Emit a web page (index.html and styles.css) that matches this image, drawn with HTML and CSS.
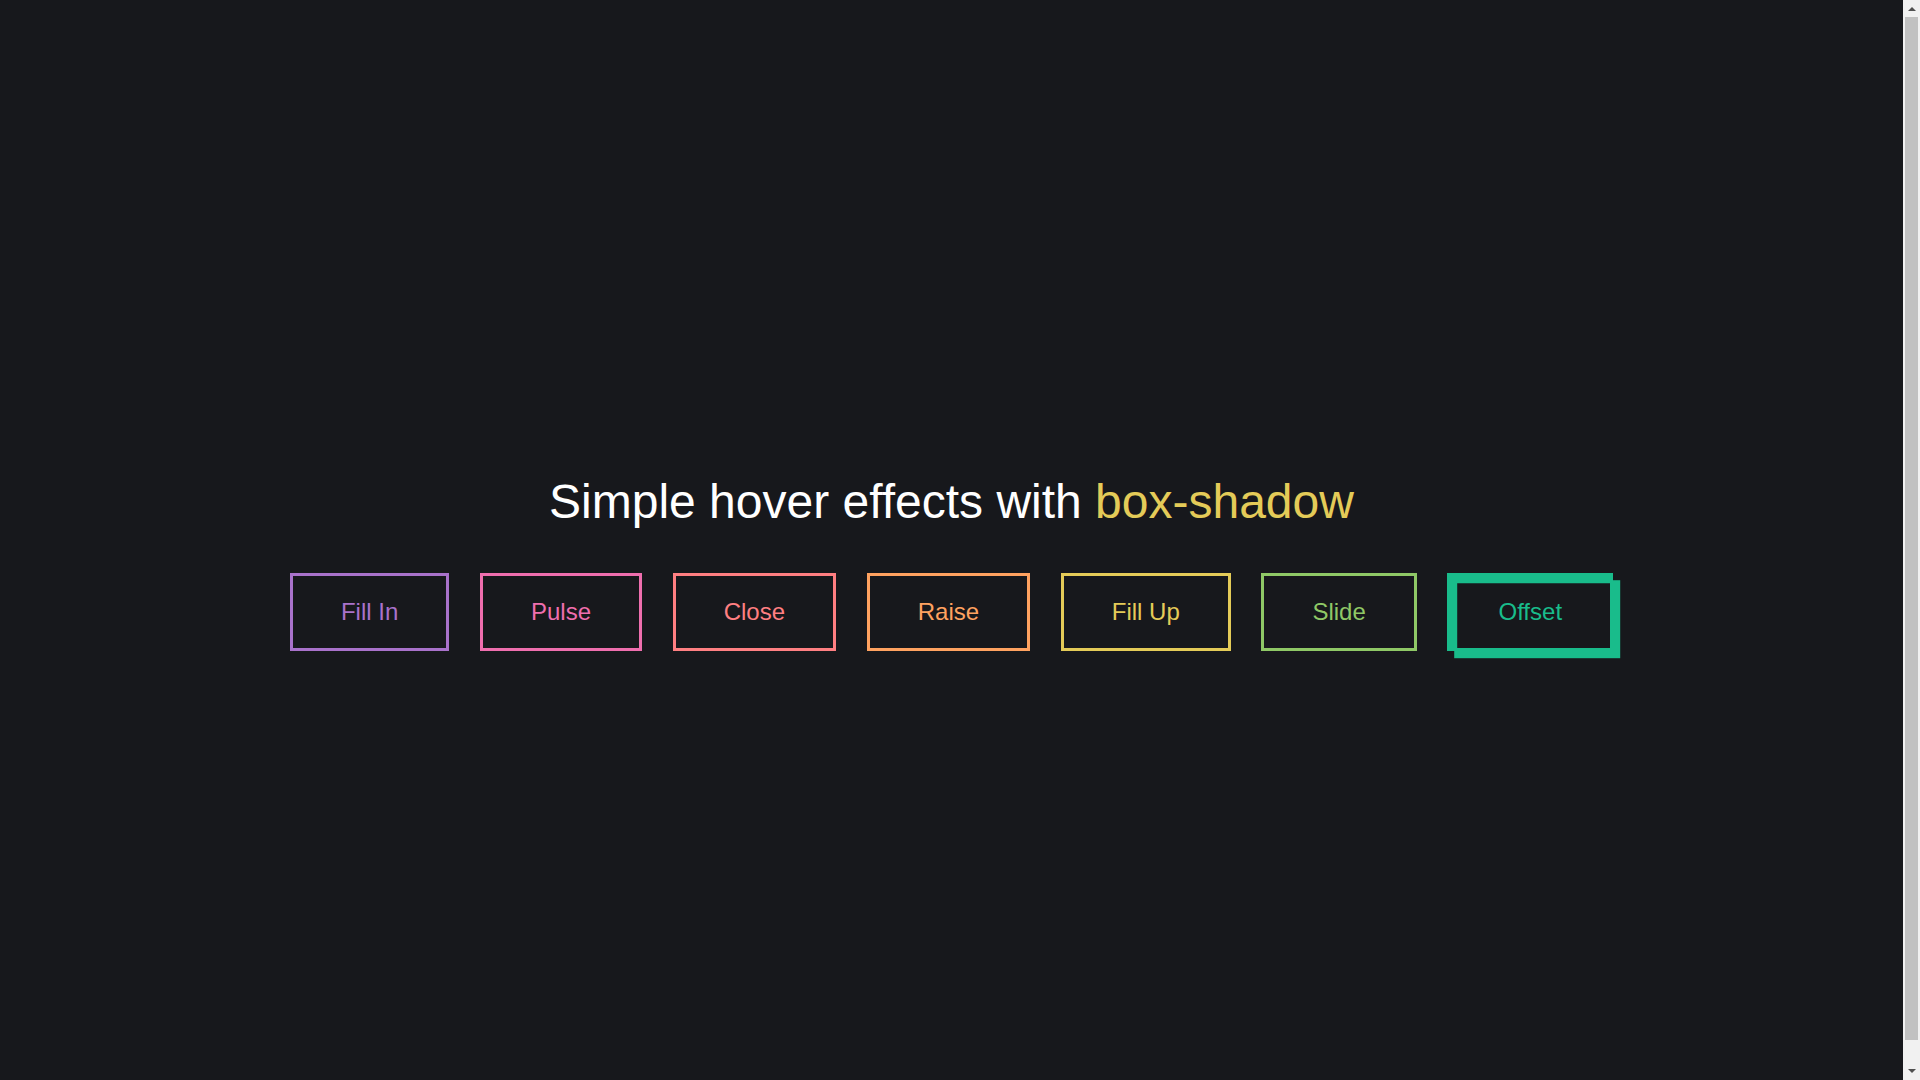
FILE: index.html
```html
<!DOCTYPE html>
<html lang="en">
<head>
<meta charset="utf-8">
<title>Simple hover effects with box-shadow</title>
<link rel="stylesheet" href="styles.css">
</head>
<body>
<main class="page">
  <div class="buttons">
    <h1>Simple hover effects with <code>box-shadow</code></h1>
    <button class="btn fill">Fill In</button>
    <button class="btn pulse">Pulse</button>
    <button class="btn close">Close</button>
    <button class="btn raise">Raise</button>
    <button class="btn up">Fill Up</button>
    <button class="btn slide">Slide</button>
    <button class="btn offset">Offset</button>
  </div>
</main>
<div class="scrollbar" aria-hidden="true">
  <span class="arrow arrow-up"></span>
  <span class="thumb"></span>
  <span class="arrow arrow-down"></span>
</div>
</body>
</html>
```

FILE: styles.css
```css
html {
  background: #17181c;
}

body {
  margin: 0;
  height: 1080px;
  overflow: hidden;
  display: flex;
  background: #17181c;
  color: #fff;
  font: 400 24px "Liberation Sans", Arial, sans-serif;
}

.page {
  flex: 1;
  padding: 12px;
  min-height: 1080px;
  display: flex;
  justify-content: center;
  align-content: center;
  align-items: center;
  text-align: center;
}

h1 {
  font-size: 48px;
  font-weight: 400;
  margin: 32.16px 0;
}

code {
  color: #e4cb58;
  font: inherit;
}

.btn {
  background: none;
  border: 3px solid;
  font: inherit;
  line-height: 1;
  margin: 12px;
  padding: 24px 48px;
  color: var(--color);
}

.fill { --color: #a972cb; }
.pulse { --color: #ef6eae; }
.close { --color: #ff7f82; }
.raise { --color: #ffa260; }
.up { --color: #e4cb58; }
.slide { --color: #8fc866; }
.offset {
  --color: #19bc8b;
  box-shadow: 7.2px 7.2px 0 0 var(--color), inset 7.2px 7.2px 0 0 var(--color);
}

.scrollbar {
  width: 17px;
  flex: none;
  height: 1080px;
  background: #f1f1f1;
  display: flex;
  flex-direction: column;
  align-items: center;
}

.arrow {
  width: 0;
  height: 0;
  border-left: 4px solid transparent;
  border-right: 4px solid transparent;
}

.arrow-up {
  border-bottom: 4px solid #505050;
  margin: 7px 0 6px;
}

.arrow-down {
  border-top: 4px solid #505050;
  margin: 29px 0 7px;
}

.thumb {
  width: 13px;
  height: 1023px;
  background: #c1c1c1;
}
```
